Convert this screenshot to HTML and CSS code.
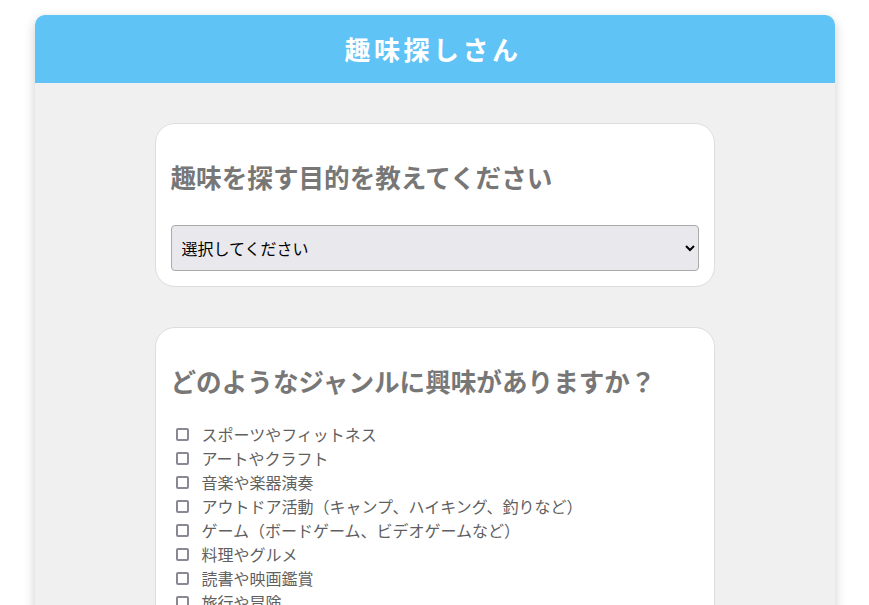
FILE: index.html
```html
<!DOCTYPE html>
<html lang="ja">
<head>
<meta charset="utf-8">
<title>趣味探しさん</title>
<link rel="stylesheet" href="styles.css">
</head>
<body>
<div class="app">
  <header class="app-header">
    <h1 class="app-title">趣味探しさん</h1>
  </header>
  <main class="app-main">
    <section class="card">
      <h2 class="card-title">趣味を探す目的を教えてください</h2>
      <select class="purpose-select">
        <option>選択してください</option>
        <option>ストレス解消</option>
        <option>新しい友達を作る</option>
        <option>スキルアップ</option>
      </select>
    </section>
    <section class="card">
      <h2 class="card-title">どのようなジャンルに興味がありますか？</h2>
      <div class="genre-list">
        <label class="genre-item"><input type="checkbox" class="genre-check"><span>スポーツやフィットネス</span></label>
        <label class="genre-item"><input type="checkbox" class="genre-check"><span>アートやクラフト</span></label>
        <label class="genre-item"><input type="checkbox" class="genre-check"><span>音楽や楽器演奏</span></label>
        <label class="genre-item"><input type="checkbox" class="genre-check"><span>アウトドア活動（キャンプ、ハイキング、釣りなど）</span></label>
        <label class="genre-item"><input type="checkbox" class="genre-check"><span>ゲーム（ボードゲーム、ビデオゲームなど）</span></label>
        <label class="genre-item"><input type="checkbox" class="genre-check"><span>料理やグルメ</span></label>
        <label class="genre-item"><input type="checkbox" class="genre-check"><span>読書や映画鑑賞</span></label>
        <label class="genre-item"><input type="checkbox" class="genre-check"><span>旅行や冒険</span></label>
        <label class="genre-item"><input type="checkbox" class="genre-check"><span>学習や資格取得</span></label>
      </div>
    </section>
  </main>
</div>
</body>
</html>
```
FILE: styles.css
```css
html, body {
  margin: 0;
  padding: 0;
  background: #ffffff;
  font-family: "Noto Sans CJK JP", "Noto Sans", sans-serif;
}

.app {
  width: 800px;
  margin: 15px auto 0;
  border-radius: 10px;
  overflow: hidden;
  background: #f0f0f0;
  box-shadow: 0 4px 12px rgba(0, 0, 0, 0.2);
}

.app-header {
  background: #5fc3f6;
  height: 68px;
  display: flex;
  align-items: center;
  justify-content: center;
}

.app-title {
  margin: 0 0 0 -3px;
  color: #ffffff;
  font-size: 26px;
  font-weight: bold;
  letter-spacing: 3.5px;
  line-height: 1;
}

.app-main {
  padding: 40px 0 40px;
}

.card {
  width: 560px;
  box-sizing: border-box;
  margin: 0 auto 40px;
  background: #ffffff;
  border: 1px solid #dddddd;
  border-radius: 20px;
  padding: 15px;
}

.card-title {
  margin: 20px 0 30px;
  font-size: 25.6px;
  line-height: 36px;
  font-weight: bold;
  color: #777777;
}

.purpose-select {
  display: block;
  width: 100%;
  height: 46px;
  margin: 0;
  padding: 0 6px;
  font-family: inherit;
  font-size: 16px;
  color: #000000;
  background: #e9e9ed;
  border: 1px solid #aaaaaa;
  border-radius: 4px;
}

.card-title + .genre-list {
  margin-top: -7px;
}

.genre-list {
  display: flex;
  flex-direction: column;
}

.genre-item {
  display: flex;
  align-items: center;
  height: 24px;
  font-size: 16px;
  color: #5f5f5f;
}

.genre-check {
  appearance: none;
  -webkit-appearance: none;
  box-sizing: border-box;
  width: 13px;
  height: 13px;
  margin: 0 13px 0 5px;
  border: 2px solid #8a8894;
  border-radius: 2px;
  background: #ffffff;
}
```
